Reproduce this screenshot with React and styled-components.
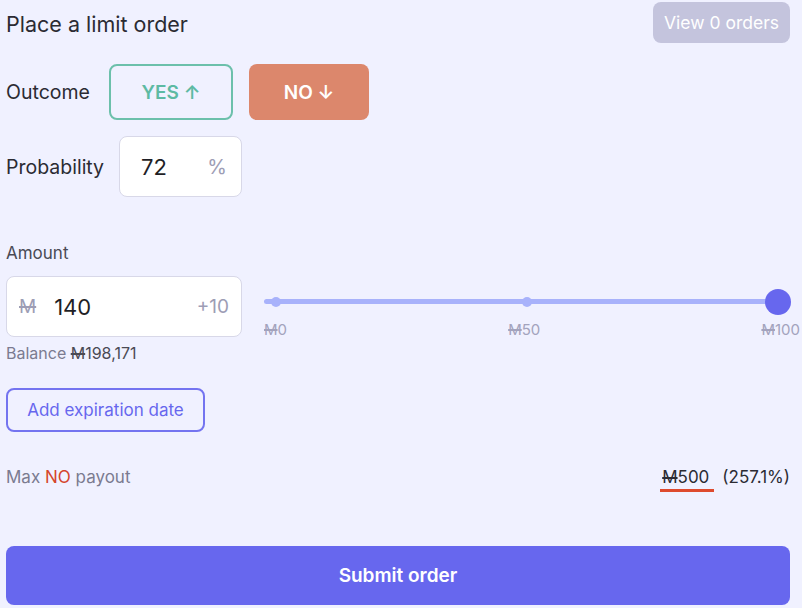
import React from "react";
import styled, { createGlobalStyle } from "styled-components";

const Global = createGlobalStyle`
  html, body { margin: 0; padding: 0; background: #f0f1ff; }
  body { font-family: Inter, "Noto Sans", sans-serif; color: #2a2a33; }
`;

const Page = styled.div`
  width: 784px;
  padding: 2px 12px 0 6px;
  display: flex;
  flex-direction: column;
`;

const Header = styled.div`
  display: flex;
  justify-content: space-between;
  align-items: flex-start;
  height: 41px;
`;

const Title = styled.div`
  font-size: 21.5px;
  height: 41px;
  display: flex;
  align-items: center;
  color: #2b2b33;
  padding-top: 1px;
`;

const GhostButton = styled.button`
  width: 137px;
  height: 41px;
  border: none;
  border-radius: 8px;
  background: #c4c4dd;
  color: #fff;
  font-family: inherit;
  font-size: 17.5px;
  padding: 0;
`;

const Row = styled.div`
  display: flex;
  align-items: center;
  gap: ${p => p.$gap || 16}px;
  margin-top: ${p => p.$mt || 0}px;
`;

const Label = styled.div`
  font-size: 19.5px;
  color: #2b2b33;
  width: ${p => p.$w ? p.$w + "px" : "auto"};
`;

const OutcomeButton = styled.button`
  width: ${p => p.$w}px;
  height: 56px;
  border-radius: 8px;
  font-family: inherit;
  font-size: 19px;
  font-weight: 600;
  display: flex;
  align-items: center;
  justify-content: center;
  gap: 6px;
  box-sizing: border-box;
  border: ${p => p.$active ? "none" : "2px solid #6cc0ab"};
  background: ${p => p.$active ? "#dc876c" : "transparent"};
  color: ${p => p.$active ? "#fff" : "#5dbaa3"};
`;

const InputBox = styled.div`
  width: ${p => p.$w}px;
  height: 61px;
  flex-shrink: 0;
  box-sizing: border-box;
  background: #fff;
  border: 1px solid #d8d8e8;
  border-radius: 8px;
  display: flex;
  align-items: center;
  padding: 0 ${p => p.$pr || 14}px 0 ${p => p.$pl || 21}px;
`;

const Value = styled.span`
  flex: 1;
  color: #1f1f26;
  font-size: 22px;
`;

const Muted = styled.span`
  color: #9d9db5;
  font-size: ${p => p.$size || 20}px;
  margin-right: ${p => p.$mr || 0}px;
`;

const Mana = styled.span`
  text-decoration: line-through;
  text-decoration-thickness: 1.5px;
`;

const SectionLabel = styled.div`
  font-size: 17px;
  color: #4a4a55;
  margin-top: 46px;
`;

const AmountRow = styled.div`
  display: flex;
  align-items: flex-start;
  gap: 22px;
  margin-top: 13px;
`;

const SliderWrap = styled.div`
  flex: 1;
  padding-top: 12px;
  display: flex;
  flex-direction: column;
`;

const Track = styled.div`
  position: relative;
  height: 5px;
  border-radius: 3px;
  background: #a8b2fb;
  margin-top: 11px;
  margin-right: 12px;
`;

const Dot = styled.div`
  position: absolute;
  top: 50%;
  width: 10px;
  height: 10px;
  border-radius: 50%;
  background: #a8b2fb;
  transform: translate(-50%, -50%);
`;

const Thumb = styled.div`
  position: absolute;
  top: 50%;
  right: -13px;
  width: 26px;
  height: 26px;
  border-radius: 50%;
  background: #6767ee;
  transform: translateY(-50%);
`;

const Ticks = styled.div`
  display: flex;
  justify-content: space-between;
  margin-top: 16px;
  margin-right: -10px;
  font-size: 15px;
  color: #a3a3bd;
`;

const Balance = styled.div`
  font-size: 16px;
  color: #7b7b90;
  margin-top: 4px;
`;

const Dark = styled.span`
  color: #4a4a55;
`;

const OutlineButton = styled.button`
  align-self: flex-start;
  margin-top: 25px;
  width: 199px;
  height: 44px;
  border: 2px solid #7474f0;
  border-radius: 8px;
  background: transparent;
  color: #6767ee;
  font-family: inherit;
  font-size: 17px;
  padding: 0;
`;

const PayoutRow = styled.div`
  display: flex;
  justify-content: space-between;
  align-items: flex-start;
  margin-top: 35px;
  font-size: 17px;
  height: 26px;
`;

const PayoutLabel = styled.div`
  color: #7b7b90;
`;

const NoText = styled.span`
  color: #d5452b;
`;

const PayoutValue = styled.div`
  color: #2b2b33;
  display: flex;
  gap: 8px;
`;

const Underlined = styled.span`
  border-bottom: 3px solid #de4a2e;
  padding: 0 5px 2px 2px;
  margin-left: -2px;
`;

const Submit = styled.button`
  margin-top: 53px;
  height: 59px;
  width: 100%;
  border: none;
  border-radius: 8px;
  background: #6767ee;
  color: #fff;
  font-family: inherit;
  font-size: 19px;
  font-weight: 600;
`;

export default function App() {
  return (
    <>
      <Global />
      <Page>
        <Header>
          <Title>Place a limit order</Title>
          <GhostButton>View 0 orders</GhostButton>
        </Header>
        <Row $mt={21} $gap={16}>
          <Label $w={87}>Outcome</Label>
          <OutcomeButton $w={124}>YES ↑</OutcomeButton>
          <OutcomeButton $w={120} $active>NO ↓</OutcomeButton>
        </Row>
        <Row $mt={16} $gap={16}>
          <Label $w={97}>Probability</Label>
          <InputBox $w={123}>
            <Value>72</Value>
            <Muted $size={20}>%</Muted>
          </InputBox>
        </Row>
        <SectionLabel>Amount</SectionLabel>
        <AmountRow>
          <InputBox $w={236} $pl={12} $pr={12}>
            <Muted $size={19} $mr={18}><Mana>M</Mana></Muted>
            <Value>140</Value>
            <Muted $size={19}>+10</Muted>
          </InputBox>
          <SliderWrap>
            <Track>
              <Dot style={{ left: 12 }} />
              <Dot style={{ left: 263 }} />
              <Thumb />
            </Track>
            <Ticks>
              <span><Mana>M</Mana>0</span>
              <span><Mana>M</Mana>50</span>
              <span><Mana>M</Mana>100</span>
            </Ticks>
          </SliderWrap>
        </AmountRow>
        <Balance>
          Balance <Dark><Mana>M</Mana>198,171</Dark>
        </Balance>
        <OutlineButton>Add expiration date</OutlineButton>
        <PayoutRow>
          <PayoutLabel>Max <NoText>NO</NoText> payout</PayoutLabel>
          <PayoutValue>
            <Underlined><Mana>M</Mana>500</Underlined>
            <span>(257.1%)</span>
          </PayoutValue>
        </PayoutRow>
        <Submit>Submit order</Submit>
      </Page>
    </>
  );
}
